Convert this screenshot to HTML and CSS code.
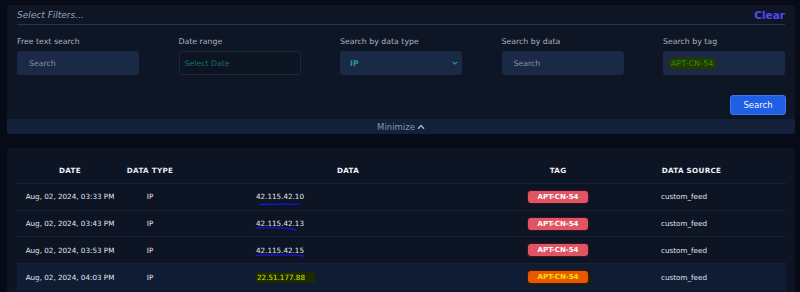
FILE: index.html
```html
<!DOCTYPE html>
<html>
<head>
<meta charset="utf-8">
<link rel="stylesheet" href="styles.css">
</head>
<body>
<section class="filters">
  <div class="filters-head">
    <span class="hint">Select Filters...</span>
    <span class="clear">Clear</span>
  </div>
  <div class="fields">
    <div class="field">
      <label>Free text search</label>
      <div class="input"><span class="ph">Search</span></div>
    </div>
    <div class="field">
      <label>Date range</label>
      <div class="input dark"><span class="teal-dim">Select Date</span></div>
    </div>
    <div class="field">
      <label>Search by data type</label>
      <div class="input select"><span class="teal">IP</span>
        <svg class="chev" width="6" height="4" viewBox="0 0 6 4"><path d="M0.8 0.8 L3 3 L5.2 0.8" fill="none" stroke="#1f9a9a" stroke-width="1.1"/></svg>
      </div>
    </div>
    <div class="field">
      <label>Search by data</label>
      <div class="input"><span class="ph">Search</span></div>
    </div>
    <div class="field">
      <label>Search by tag</label>
      <div class="input tag-input"><span class="tag-hl">APT-CN-54</span></div>
    </div>
  </div>
  <div class="actions"><button class="btn">Search</button></div>
  <div class="minimize">Minimize
    <svg width="8" height="6" viewBox="0 0 8 6"><path d="M1 4.8 L4 1.6 L7 4.8" fill="none" stroke="#aab2c2" stroke-width="1.4"/></svg>
  </div>
</section>

<section class="results">
  <div class="row head">
    <div class="c1">DATE</div>
    <div class="c2">DATA TYPE</div>
    <div class="c3 hc">DATA</div>
    <div class="c4">TAG</div>
    <div class="c5">DATA SOURCE</div>
  </div>
  <div class="row">
    <div class="c1">Aug, 02, 2024, 03:33 PM</div>
    <div class="c2">IP</div>
    <div class="c3"><span class="ip">42.115.42.10</span></div>
    <div class="c4"><span class="badge">APT-CN-54</span></div>
    <div class="c5">custom_feed</div>
  </div>
  <div class="row">
    <div class="c1">Aug, 02, 2024, 03:43 PM</div>
    <div class="c2">IP</div>
    <div class="c3"><span class="ip">42.115.42.13</span></div>
    <div class="c4"><span class="badge">APT-CN-54</span></div>
    <div class="c5">custom_feed</div>
  </div>
  <div class="row">
    <div class="c1">Aug, 02, 2024, 03:53 PM</div>
    <div class="c2">IP</div>
    <div class="c3"><span class="ip">42.115.42.15</span></div>
    <div class="c4"><span class="badge">APT-CN-54</span></div>
    <div class="c5">custom_feed</div>
  </div>
  <div class="row active">
    <div class="c1">Aug, 02, 2024, 04:03 PM</div>
    <div class="c2">IP</div>
    <div class="c3"><span class="ip hl">22.51.177.88</span></div>
    <div class="c4"><span class="badge orange">APT-CN-54</span></div>
    <div class="c5">custom_feed</div>
  </div>
</section>
<svg class="marks" width="800" height="292" viewBox="0 0 800 292">
  <path d="M260 204.5 C272 204 286 204 299 204.3" fill="none" stroke="#1616d8" stroke-width="1.3" stroke-linecap="round"/>
  <path d="M256 228 C268 227.5 282 227.6 292 229 C294 229.3 295 230 296 230.5" fill="none" stroke="#1616d8" stroke-width="1.3" stroke-linecap="round"/>
  <path d="M256 255.3 C270 254.8 288 254.6 304 256" fill="none" stroke="#1616d8" stroke-width="1.3" stroke-linecap="round"/>
</svg>
</body>
</html>
```

FILE: styles.css
```css
* { box-sizing: border-box; }
html, body { margin: 0; padding: 0; }
body {
  width: 800px;
  height: 292px;
  overflow: hidden;
  background: #070b18;
  font-family: "DejaVu Sans", sans-serif;
  color: #d8dce4;
  position: relative;
}
.filters {
  margin: 5px 5px 0 7px;
  background: #0e1626;
  border-radius: 3px;
  overflow: hidden;
}
.filters-head {
  margin: 0 10px;
  height: 20px;
  display: flex;
  justify-content: space-between;
  align-items: center;
  border-bottom: 1px solid #27334a;
}
.hint {
  font-style: italic;
  font-size: 9px;
  color: #9aa2b2;
}
.clear {
  font-size: 10.5px;
  font-weight: bold;
  color: #5548f2;
}
.fields {
  display: grid;
  grid-template-columns: repeat(5, 122px);
  column-gap: 39.5px;
  padding: 11px 10px 0;
}
.field label {
  display: block;
  font-size: 7.8px;
  color: #aab1bf;
  height: 15px;
  line-height: 12px;
}
.input {
  height: 24px;
  background: #1a2a46;
  border-radius: 3px;
  display: flex;
  align-items: center;
  padding: 0 12px;
  font-size: 7.8px;
}
.input.dark {
  background: #0c1421;
  border: 1px solid #1b2740;
  padding-left: 5px;
}
.input.select { padding: 0 10px; justify-content: space-between; }
.input.tag-input { padding-left: 6px; }
.ph { color: #8891a3; }
.teal-dim { color: #14706c; }
.teal { color: #1f9a9a; font-weight: bold; }
.chev { margin-right: -6px; }
.tag-hl {
  background: #273700;
  color: #1c9a16;
  border-radius: 4px;
  padding: 1px 2px;
  letter-spacing: 0.2px;
}
.actions {
  display: flex;
  justify-content: flex-end;
  padding: 20px 9px 0 0;
}
.btn {
  width: 56px;
  height: 20px;
  background: #1f5fe6;
  border: 1px solid #3a78f0;
  border-radius: 3px;
  color: #f2f5fb;
  font-family: inherit;
  font-size: 8.5px;
  padding: 0;
}
.minimize {
  margin-top: 4px;
  height: 15px;
  background: #12203a;
  display: flex;
  align-items: center;
  justify-content: center;
  gap: 2px;
  font-size: 8.5px;
  color: #8d96a8;
}
.results {
  margin: 14px 5px 0 7px;
  background: #0d1424;
  border-radius: 4px 4px 0 0;
  padding: 0 9px 0 10px;
  height: 144px;
  overflow: hidden;
}
.row {
  display: grid;
  grid-template-columns: 106px 54px 342px 78px 189px;
  height: 26.7px;
  align-items: center;
  border-bottom: 1px solid #1a2235;
  font-size: 7.2px;
  color: #e2e5ec;
}
.row > div { text-align: center; white-space: nowrap; }
.row .c2 { color: #e6e8ee; }
.row .c3 { text-align: left; padding-left: 79px; }
.row .c3.hc { text-align: center; padding-left: 0; }
.row .c5 { text-align: left; padding-left: 64px; }
.row.head .c5 { text-align: center; padding-left: 0; }
.row.head {
  height: 36px;
  padding-top: 10px;
  font-weight: bold;
  font-size: 7.2px;
  letter-spacing: 0.3px;
  color: #f0f2f6;
}
.row.active {
  background: #101c33;
  border-bottom: none;
}
.ip.hl {
  background: #1c2800;
  color: #d6e800;
  padding: 1px 10px 1px 1px;
}
.badge {
  display: inline-block;
  width: 60px;
  height: 12px;
  line-height: 12px;
  border-radius: 3px;
  background: #e05563;
  color: #fff;
  font-weight: bold;
  font-size: 7px;
  box-shadow: 0 0 0 1px #3a1420;
}
.badge.orange {
  background: #e85800;
  color: #f4e600;
  box-shadow: 0 0 0 1px #3a1a10, 3px 2px 0 0 #1a2200;
}
.marks {
  position: absolute;
  left: 0;
  top: 0;
  pointer-events: none;
}
```
